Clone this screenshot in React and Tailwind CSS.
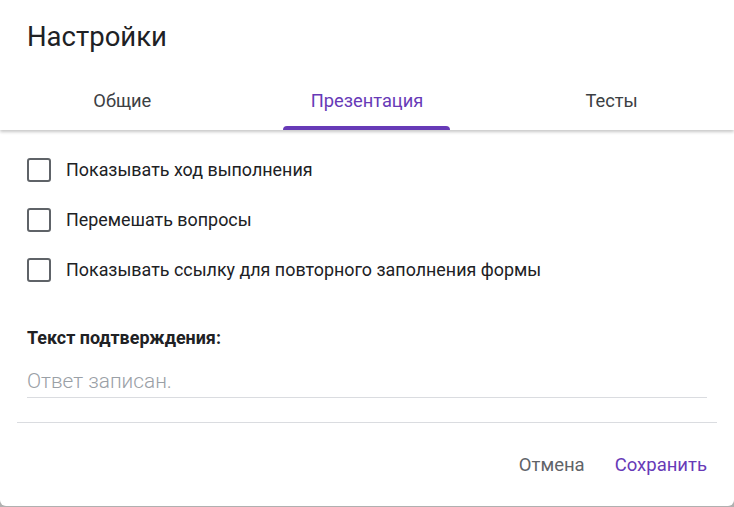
import { useState } from 'react';

const TABS = ['Общие', 'Презентация', 'Тесты'];

const OPTIONS = [
  'Показывать ход выполнения',
  'Перемешать вопросы',
  'Показывать ссылку для повторного заполнения формы',
];

export default function App() {
  const [active] = useState(1);

  return (
    <div className="h-[507px] w-[734px] bg-[#b0b0b0] font-['Roboto',sans-serif] text-[#202124]">
      <div className="h-[506px] bg-white rounded-b-[6px] flex flex-col overflow-hidden">
        {/* Шапка */}
        <div className="relative z-10 shadow-[0_2px_3px_rgba(0,0,0,0.22)] bg-white">
          <h1 className="px-[27px] pt-[19px] text-[27.5px] leading-[36px] font-normal">Настройки</h1>
          <div className="grid grid-cols-3 mt-[34px]">
            {TABS.map((t, i) => (
              <div key={t} className="flex flex-col items-center">
                <span
                  className={`text-[18.3px] leading-[24px] font-normal ${
                    i === active ? 'text-[#673ab7]' : 'text-[#3c4043]'
                  }`}
                >
                  {t}
                </span>
                <div
                  className={`mt-[13px] h-[4px] w-[167px] rounded-t-[4px] ${
                    i === active ? 'bg-[#673ab7]' : 'bg-transparent'
                  }`}
                />
              </div>
            ))}
          </div>
        </div>

        {/* Опции */}
        <div className="px-[27px] pt-[28px] flex flex-col gap-[26px]">
          {OPTIONS.map((o) => (
            <label key={o} className="flex items-center gap-[15px]">
              <span className="w-[24px] h-[24px] rounded-[3px] border-2 border-[#5f6368] shrink-0" />
              <span className="text-[17.9px] leading-[24px]">{o}</span>
            </label>
          ))}
        </div>

        <div className="px-[27px] mt-[44px]">
          <p className="text-[17.9px] leading-[24px] font-bold">Текст подтверждения:</p>
          <div className="mt-[17px] border-b border-[#dadce0] pb-[2px]">
            <span className="text-[20.8px] leading-[28px] font-light text-[#9aa0a6]">Ответ записан.</span>
          </div>
        </div>

        <div className="mx-[17px] mt-[24px] border-t border-[#dadce0]" />

        <div className="flex justify-end items-center gap-[30px] px-[27px] mt-[30px]">
          <button className="text-[18.5px] leading-[24px] font-normal text-[#5f6368]">Отмена</button>
          <button className="text-[18.5px] leading-[24px] font-normal text-[#673ab7]">Сохранить</button>
        </div>
      </div>
    </div>
  );
}
